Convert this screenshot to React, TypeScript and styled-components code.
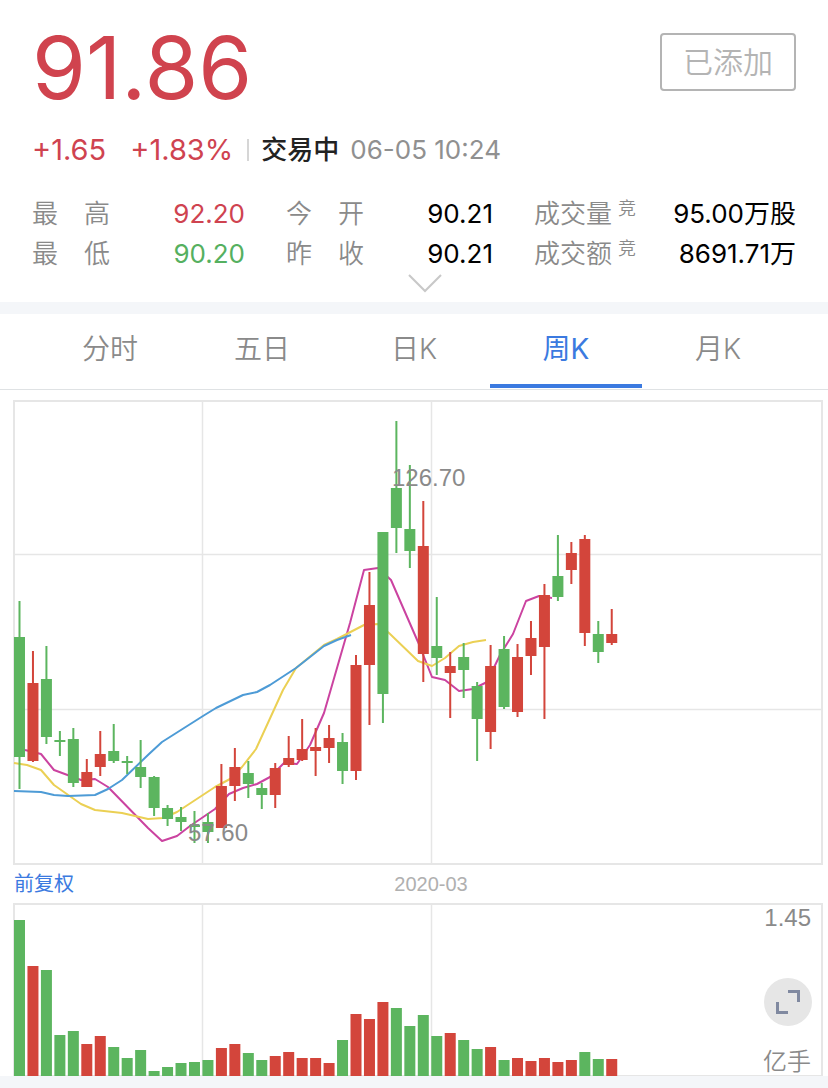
import React from "react";
import styled, { createGlobalStyle } from "styled-components";

const RED = "#d3453b";
const GREEN = "#5cb55f";
const GRID = "#e6e6e6";

const GlobalStyle = createGlobalStyle`
  * { box-sizing: border-box; }
  body {
    margin: 0;
    background: #fff;
    font-family: Inter, "Noto Sans CJK SC", sans-serif;
    color: #000;
  }
  button { font-family: inherit; cursor: pointer; }
`;

const Page = styled.main`
  width: 100%;
  background: #fff;
`;

const Quote = styled.header`
  display: flex;
  flex-direction: column;
  padding: 20px 32px 9px;
  border-bottom: 12px solid #f4f6f9;
`;

const QuoteTop = styled.div`
  display: flex;
  justify-content: space-between;
  align-items: flex-start;
`;

const Price = styled.div`
  font-size: 87px;
  line-height: 96px;
  color: #d0434e;
`;

const AddedButton = styled.button`
  margin-top: 13px;
  width: 136px;
  height: 58px;
  padding: 0;
  border: 2px solid #b4b4b4;
  border-radius: 4px;
  background: #fff;
  color: #b4b4b4;
  font-size: 30px;
  font-weight: 350;
  line-height: 54px;
`;

const StatusLine = styled.div`
  display: flex;
  align-items: center;
  height: 40px;
  margin-top: 14px;
  font-size: 26px;
  line-height: 40px;
  white-space: nowrap;
`;

const Change = styled.span`
  margin-right: 24px;
  font-size: 29px;
  color: #cf4350;
`;

const ChangePercent = styled(Change)`
  margin-right: 14px;
`;

const Divider = styled.span`
  width: 2px;
  height: 22px;
  margin-right: 12px;
  background: #d6d6d6;
`;

const Status = styled.strong`
  margin-right: 11px;
  font-weight: 500;
  color: #222;
`;

const Timestamp = styled.time`
  color: #909090;
`;

const Stats = styled.dl`
  display: grid;
  grid-template-columns: 213fr 207fr 262fr;
  column-gap: 41px;
  margin: 24px 0 0;
`;

const Stat = styled.div`
  display: flex;
  justify-content: space-between;
  height: 40px;
  font-size: 26px;
  line-height: 40px;
  white-space: nowrap;
`;

const StatName = styled.dt`
  display: flex;
  font-weight: 350;
  color: #8a8a8a;
`;

const AuctionMark = styled.small`
  margin-left: 6px;
  font-size: 18px;
  line-height: 30px;
`;

const StatValue = styled.dd<{ $color?: string }>`
  margin: 0;
  color: ${(p) => p.$color ?? "#000"};
`;

const ExpandButton = styled.button`
  align-self: center;
  display: flex;
  padding: 0;
  margin-left: 22px;
  border: 0;
  background: none;
`;

const TabBar = styled.nav`
  display: flex;
  height: 76px;
  padding: 0 34px;
  border-bottom: 1px solid #dfe2e4;
`;

const Tab = styled.button<{ $active: boolean }>`
  flex: 1;
  height: 74px;
  padding: 0 0 4px;
  border: 0;
  border-bottom: 4px solid ${(p) => (p.$active ? "#3b7ae0" : "transparent")};
  background: none;
  color: ${(p) => (p.$active ? "#3b7ae0" : "#8a8a8a")};
  font-size: 28px;
  font-weight: ${(p) => (p.$active ? 400 : 350)};
`;

const Chart = styled.svg`
  display: block;
  width: 100%;
  height: auto;
  font-family: "Liberation Sans", "Noto Sans CJK SC", sans-serif;
`;

const Axis = styled.div`
  display: grid;
  grid-template-columns: 1fr auto 1fr;
  align-items: center;
  height: 38px;
  padding: 0 0 0 14px;
  font-family: "Liberation Sans", "Noto Sans CJK SC", sans-serif;
  font-size: 20px;
  line-height: 38px;
`;

const AdjustLink = styled.a`
  color: #3b7ae0;
  text-decoration: none;
`;

const AxisDate = styled.span`
  margin-right: -20px;
  color: #b0b0b0;
`;

const VolumePanel = styled.section`
  position: relative;
  border-bottom: 12px solid #f4f6f9;
`;

const FullscreenButton = styled.button`
  position: absolute;
  right: 16px;
  bottom: 50px;
  width: 48px;
  height: 48px;
  padding: 0;
  border: 0;
  border-radius: 50%;
  background: #e6e6e6;
`;

type Candle = [color: "r" | "g", high: number, top: number, bottom: number, low: number];

const CANDLES: Candle[] = [
  ["g", 601, 637, 757, 789], ["r", 651, 683, 761, 762], ["g", 646, 679, 737, 744],
  ["g", 731, 740, 742, 756], ["g", 728, 739, 783, 787], ["r", 759, 772, 787, 787],
  ["r", 731, 754, 767, 776], ["g", 724, 751, 761, 763], ["g", 756, 761, 763, 774],
  ["g", 740, 767, 777, 788], ["g", 776, 777, 808, 816], ["g", 805, 808, 819, 826],
  ["g", 807, 817, 822, 831], ["g", 811, 825, 827, 843], ["g", 813, 822, 832, 843],
  ["r", 764, 786, 828, 828], ["r", 748, 767, 786, 801], ["g", 761, 773, 784, 798],
  ["g", 783, 788, 795, 809], ["r", 763, 768, 795, 808], ["r", 736, 758, 765, 767],
  ["r", 719, 749, 760, 761], ["r", 728, 747, 751, 776], ["r", 725, 738, 748, 763],
  ["g", 733, 742, 771, 784], ["r", 655, 665, 771, 780], ["r", 572, 605, 665, 725],
  ["g", 532, 532, 694, 723], ["g", 421, 488, 528, 553], ["g", 465, 529, 551, 568],
  ["r", 501, 546, 654, 682], ["g", 597, 646, 658, 675], ["r", 652, 666, 673, 718],
  ["g", 643, 657, 670, 698], ["g", 682, 686, 719, 761], ["r", 645, 666, 732, 749],
  ["g", 636, 649, 707, 709], ["r", 644, 657, 712, 717], ["r", 621, 638, 656, 675],
  ["r", 584, 595, 647, 719], ["g", 535, 576, 597, 601], ["r", 542, 553, 570, 584],
  ["r", 535, 539, 633, 646], ["g", 621, 634, 652, 663], ["r", 609, 634, 643, 645],
];

const VOLUMES = [
  156, 110, 106, 41, 45, 32, 40, 29, 18, 26, 5, 9, 13, 14, 16, 28, 32, 23, 16, 20,
  24, 18, 18, 13, 36, 62, 57, 74, 68, 50, 61, 40, 43, 36, 27, 29, 16, 18, 15, 18,
  14, 16, 24, 17, 17,
];
const VOLUME_COLORS = "grgggrrggggggggrrggrrrrrgrrrggggrggrgrrrrrggr";

const MA_SHORT =
  "25,750 41,754 54,770 81,780 95,779 108,787 148,828 162,841 177,836 190,826 215,809 229,794 243,788 257,784 270,777 284,763 297,764 310,745 324,713 350,623 364,570 378,568 391,580 418,642 432,677 445,680 459,691 473,689 487,682 500,655 513,634 526,601 539,596 552,598";
const MA_MID =
  "14,763 27,765 41,770 54,785 81,804 95,810 122,813 148,819 163,818 177,812 215,787 230,779 242,767 256,749 283,690 296,668 324,645 337,639 364,625 378,624 389,633 418,661 432,666 445,658 459,646 473,642 486,640";
const MA_LONG =
  "14,791 41,792 54,795 68,796 95,795 108,789 122,780 149,754 162,742 203,716 216,708 243,695 257,692 270,685 296,668 324,646 337,640 351,635";

const centerOf = (i: number) => 19.5 + i * 13.46;
const fillOf = (c: string) => (c === "r" ? RED : GREEN);

function PriceChart() {
  return (
    <Chart viewBox="0 390 828 475" role="img" aria-label="周K">
      <g fill="none" stroke={GRID} strokeWidth="2">
        <rect x="14" y="401" width="808" height="463" />
        <path d="M202.5 401V864M431.5 401V864M14 554.5H822M14 709.5H822" strokeWidth="1.5" />
      </g>
      <g fill="none" strokeWidth="2" strokeLinejoin="round">
        <polyline points={MA_SHORT} stroke="#cb43a0" />
        <polyline points={MA_MID} stroke="#ebd054" />
        <polyline points={MA_LONG} stroke="#4d9bd6" />
      </g>
      {CANDLES.map(([c, high, top, bottom, low], i) => (
        <g key={i} fill={fillOf(c)}>
          <rect x={centerOf(i) - 1} y={high} width="2" height={low - high} />
          <rect x={centerOf(i) - 5.5} y={top} width="11" height={bottom - top} />
        </g>
      ))}
      <g fill="#8a8a8a" fontSize="24">
        <text x="392" y="486">126.70</text>
        <text x="188" y="841">57.60</text>
      </g>
    </Chart>
  );
}

function VolumeChart() {
  return (
    <Chart viewBox="0 903 828 173" role="img" aria-label="成交量">
      <g fill="none" stroke={GRID} strokeWidth="2">
        <rect x="14" y="904" width="808" height="172" />
        <path d="M202.5 904V1076M431.5 904V1076" strokeWidth="1.5" />
      </g>
      {VOLUMES.map((h, i) => (
        <rect
          key={i}
          x={centerOf(i) - 5.5}
          y={1076 - h}
          width="11"
          height={h}
          fill={fillOf(VOLUME_COLORS[i])}
        />
      ))}
      <g fill="#8a8a8a" fontSize="24" textAnchor="end">
        <text x="811" y="926">1.45</text>
        <text x="811" y="1070" fontWeight="350">亿手</text>
      </g>
    </Chart>
  );
}

const STATS = [
  { name: "最　高", value: "92.20", color: "#cf4350" },
  { name: "今　开", value: "90.21" },
  { name: "成交量", mark: "竞", value: "95.00万股" },
  { name: "最　低", value: "90.20", color: "#55b060" },
  { name: "昨　收", value: "90.21" },
  { name: "成交额", mark: "竞", value: "8691.71万" },
];

const TABS = ["分时", "五日", "日K", "周K", "月K"];

export default function App() {
  const [active, setActive] = React.useState("周K");
  return (
    <Page>
      <GlobalStyle />
      <Quote>
        <QuoteTop>
          <Price>91.86</Price>
          <AddedButton type="button">已添加</AddedButton>
        </QuoteTop>
        <StatusLine>
          <Change>+1.65</Change>
          <ChangePercent>+1.83%</ChangePercent>
          <Divider />
          <Status>交易中</Status>
          <Timestamp>06-05 10:24</Timestamp>
        </StatusLine>
        <Stats>
          {STATS.map((s) => (
            <Stat key={s.name}>
              <StatName>
                {s.name}
                {s.mark && <AuctionMark>{s.mark}</AuctionMark>}
              </StatName>
              <StatValue $color={s.color}>{s.value}</StatValue>
            </Stat>
          ))}
        </Stats>
        <ExpandButton type="button" aria-label="展开">
          <svg width="34" height="19" viewBox="0 0 34 19" fill="none" stroke="#c8c8c8" strokeWidth="2">
            <path d="M1 1L17 17L33 1" />
          </svg>
        </ExpandButton>
      </Quote>
      <TabBar>
        {TABS.map((t) => (
          <Tab key={t} type="button" $active={t === active} onClick={() => setActive(t)}>
            {t}
          </Tab>
        ))}
      </TabBar>
      <PriceChart />
      <Axis>
        <AdjustLink href="#adjust">前复权</AdjustLink>
        <AxisDate>2020-03</AxisDate>
      </Axis>
      <VolumePanel>
        <VolumeChart />
        <FullscreenButton type="button" aria-label="全屏">
          <svg width="48" height="48" viewBox="0 0 48 48" fill="none" stroke="#8089a0" strokeWidth="3">
            <path d="M24 13.5H34.5V24M13.5 24V34.5H24" />
          </svg>
        </FullscreenButton>
      </VolumePanel>
    </Page>
  );
}
